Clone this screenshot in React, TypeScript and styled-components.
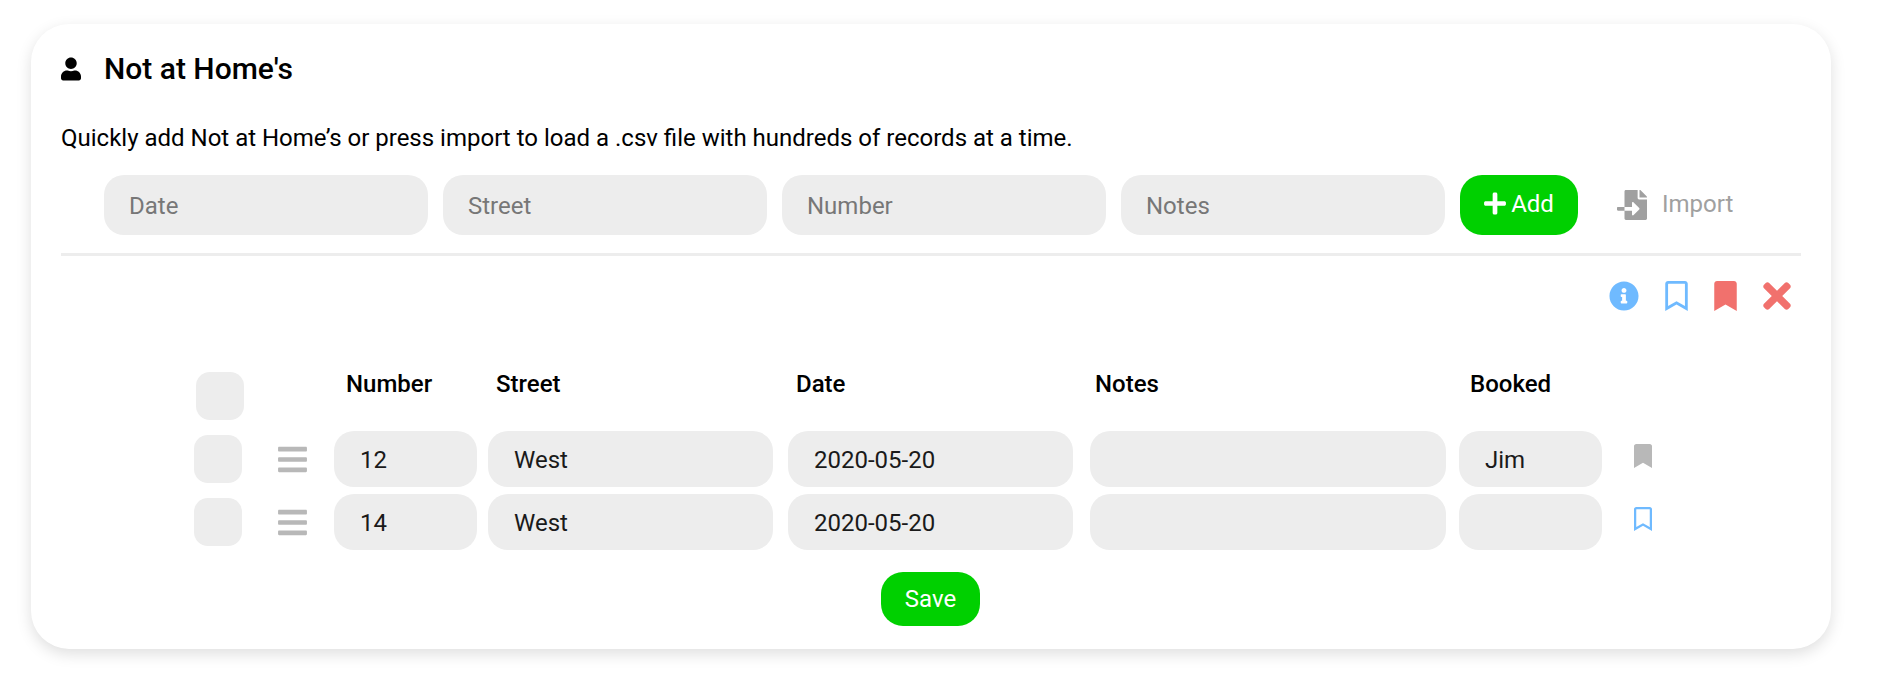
import React from "react";
import styled, { createGlobalStyle } from "styled-components";
import {
  FaBars,
  FaBookmark,
  FaFileImport,
  FaInfoCircle,
  FaPlus,
  FaRegBookmark,
  FaTimes,
  FaUser,
} from "react-icons/fa";

const GlobalStyle = createGlobalStyle`
  * {
    box-sizing: border-box;
  }
  body {
    margin: 0;
    background: #fff;
    font-family: Roboto, "Liberation Sans", sans-serif;
    color: #000;
  }
`;

const Page = styled.div`
  padding: 24px 48px 44px 31px;
`;

const Card = styled.section`
  width: 1800px;
  padding: 24px 30px 23px;
  background: #fff;
  border-radius: 38px;
  box-shadow: 0 5px 15px rgba(0, 0, 0, 0.13);
`;

const Header = styled.header`
  display: flex;
  align-items: center;
  height: 42px;
  svg {
    width: 20px;
    height: 24px;
    margin-right: 23px;
  }
`;

const Title = styled.h2`
  margin: 0 0 2px;
  font-size: 30px;
  font-weight: 500;
`;

const Description = styled.p`
  margin: 32px 0 0;
  font-size: 24px;
  line-height: 32px;
`;

const AddForm = styled.form`
  display: flex;
  align-items: center;
  gap: 15px;
  height: 60px;
  margin-top: 21px;
  padding-left: 43px;
`;

const Field = styled.input<{ $width: number; $height: number }>`
  flex: none;
  width: ${(p) => p.$width}px;
  height: ${(p) => p.$height}px;
  padding: 2px 25px 0;
  border: none;
  outline: none;
  border-radius: 20px;
  background: #ededed;
  font-family: inherit;
  font-size: 24px;
  color: #1a1a1a;
  &::placeholder {
    color: #777;
    opacity: 1;
  }
`;

const RowField = styled(Field)`
  padding-left: 26px;
`;

const GreenButton = styled.button<{ $width: number; $height: number }>`
  display: flex;
  align-items: center;
  justify-content: center;
  flex: none;
  width: ${(p) => p.$width}px;
  height: ${(p) => p.$height}px;
  padding: 0;
  border: none;
  border-radius: 22px;
  background: #00d000;
  font-family: inherit;
  font-size: 24px;
  color: #fff;
`;

const AddIcon = styled(FaPlus)`
  width: 22px;
  height: 25px;
  margin: 0 5px 3px 0;
`;

const AddLabel = styled.span`
  margin-bottom: 3px;
`;

const ImportButton = styled.button`
  display: flex;
  align-items: center;
  margin-left: 24px;
  padding: 0;
  border: none;
  background: none;
  font-family: inherit;
  font-size: 24px;
  color: #a0a0a0;
  svg {
    width: 30px;
    height: 30px;
    margin-right: 15px;
  }
`;

const ImportLabel = styled.span`
  margin-bottom: 2px;
`;

const Divider = styled.hr`
  height: 3px;
  margin: 18px 0 0;
  border: none;
  background: #ededed;
`;

const Actions = styled.div`
  display: flex;
  justify-content: flex-end;
  align-items: center;
  gap: 26px;
  height: 30px;
  margin-top: 25px;
  padding-right: 10px;
`;

const ActionIcon = styled.span<{ $color: string; $width: number; $height: number }>`
  display: flex;
  align-items: center;
  height: 30px;
  color: ${(p) => p.$color};
  svg {
    width: ${(p) => p.$width}px;
    height: ${(p) => p.$height}px;
  }
`;

const Table = styled.div`
  margin: 61px 0 0 133px;
`;

const TableRow = styled.div<{ $top: number }>`
  display: grid;
  grid-template-columns: 84px 56px 154px 300px 302px 369px 175px 18px;
  align-items: center;
  margin-top: ${(p) => p.$top}px;
`;

const HeadRow = styled(TableRow)`
  align-items: start;
  height: 48px;
`;

const HeadCell = styled.div<{ $indent: number }>`
  padding-left: ${(p) => p.$indent}px;
  font-size: 24px;
  font-weight: 500;
  line-height: 24px;
`;

const Check = styled.input<{ $indent?: number }>`
  appearance: none;
  display: block;
  width: 48px;
  height: 48px;
  margin: 0 0 0 ${(p) => p.$indent ?? 0}px;
  border-radius: 14px;
  background: #ededed;
`;

const Handle = styled(FaBars)`
  display: block;
  width: 29px;
  height: 33px;
  color: #b8b8b8;
`;

const Mark = styled.span<{ $color: string }>`
  display: flex;
  color: ${(p) => p.$color};
  margin-top: -6px;
  svg {
    width: 18px;
    height: 24px;
  }
`;

const SaveRow = styled.div`
  display: flex;
  justify-content: center;
  margin-top: 22px;
  padding-right: 1px;
`;

const columns = [
  { label: "Number", indent: 12 },
  { label: "Street", indent: 8 },
  { label: "Date", indent: 8 },
  { label: "Notes", indent: 5 },
  { label: "Booked", indent: 11 },
];

const rows = [
  { number: "12", street: "West", date: "2020-05-20", notes: "", booked: "Jim" },
  { number: "14", street: "West", date: "2020-05-20", notes: "", booked: "" },
];

const App = () => {
  return (
    <Page>
      <GlobalStyle />
      <Card>
        <Header>
          <FaUser />
          <Title>Not at Home's</Title>
        </Header>
        <Description>
          Quickly add Not at Home’s or press import to load a .csv file with hundreds of records at a time.
        </Description>
        <AddForm>
          {["Date", "Street", "Number", "Notes"].map((name) => (
            <Field key={name} placeholder={name} $width={324} $height={60} />
          ))}
          <GreenButton type="button" $width={118} $height={60}>
            <AddIcon />
            <AddLabel>Add</AddLabel>
          </GreenButton>
          <ImportButton type="button">
            <FaFileImport />
            <ImportLabel>Import</ImportLabel>
          </ImportButton>
        </AddForm>
        <Divider />
        <Actions>
          <ActionIcon $color="#6fbaff" $width={30} $height={30}>
            <FaInfoCircle />
          </ActionIcon>
          <ActionIcon $color="#6fbaff" $width={23} $height={30}>
            <FaRegBookmark />
          </ActionIcon>
          <ActionIcon $color="#f1716d" $width={23} $height={30}>
            <FaBookmark />
          </ActionIcon>
          <ActionIcon $color="#f1716d" $width={28} $height={40}>
            <FaTimes />
          </ActionIcon>
        </Actions>
        <Table>
          <HeadRow $top={0}>
            <Check type="checkbox" $indent={2} />
            <span />
            {columns.map((col) => (
              <HeadCell key={col.label} $indent={col.indent}>
                {col.label}
              </HeadCell>
            ))}
          </HeadRow>
          {rows.map((row, i) => (
            <TableRow key={row.number} $top={i === 0 ? 11 : 7}>
              <Check type="checkbox" />
              <Handle />
              <RowField defaultValue={row.number} $width={143} $height={56} />
              <RowField defaultValue={row.street} $width={285} $height={56} />
              <RowField defaultValue={row.date} $width={285} $height={56} />
              <RowField defaultValue={row.notes} $width={356} $height={56} />
              <RowField defaultValue={row.booked} $width={143} $height={56} />
              <Mark $color={row.booked ? "#b8b8b8" : "#6fbaff"}>
                {row.booked ? <FaBookmark /> : <FaRegBookmark />}
              </Mark>
            </TableRow>
          ))}
        </Table>
        <SaveRow>
          <GreenButton type="button" $width={99} $height={54}>
            Save
          </GreenButton>
        </SaveRow>
      </Card>
    </Page>
  );
};

export default App;
